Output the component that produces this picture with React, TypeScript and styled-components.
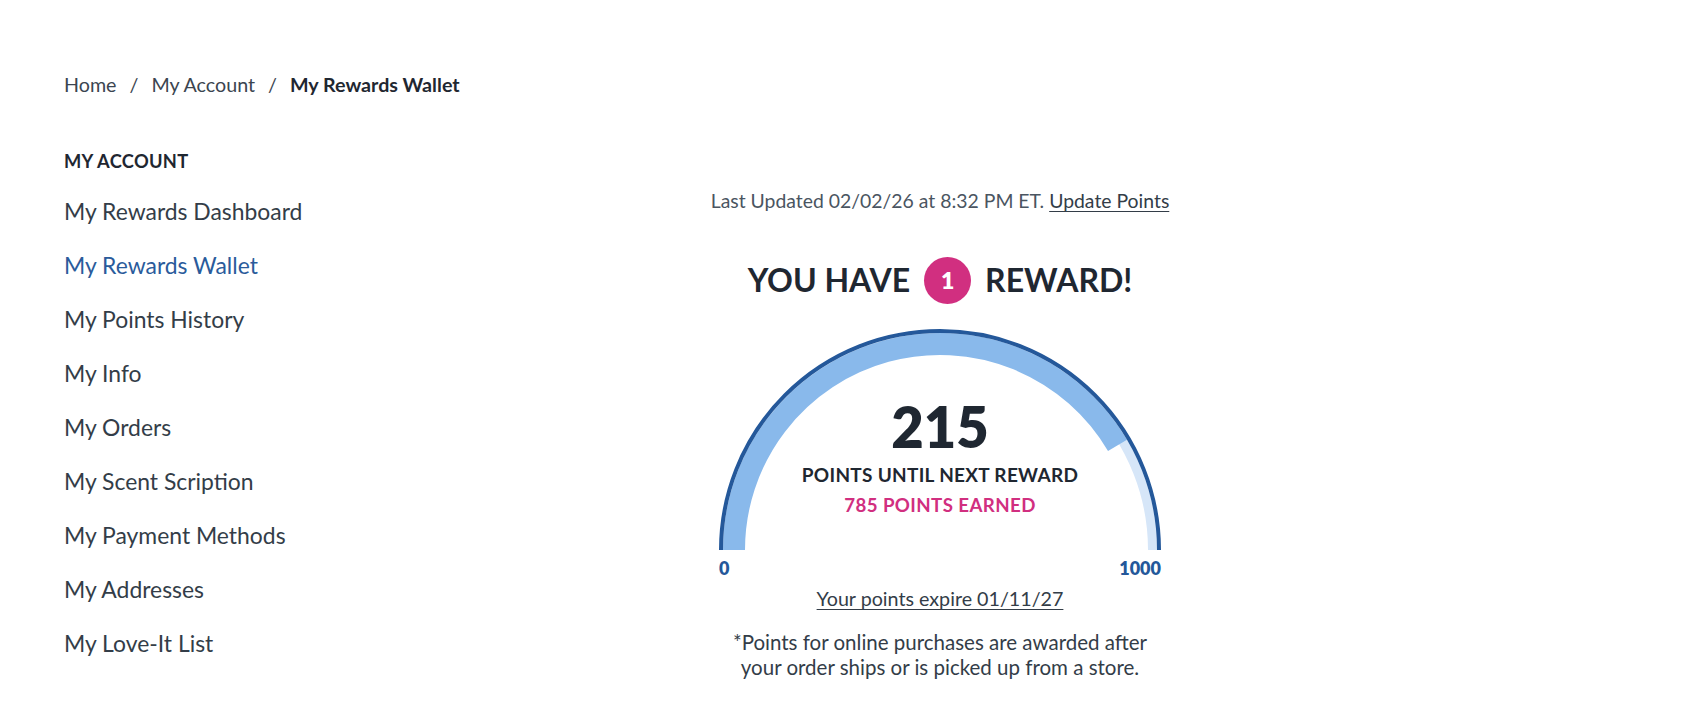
import React from "react";
import styled, { createGlobalStyle } from "styled-components";

const Global = createGlobalStyle`
  html, body { margin: 0; padding: 0; background: #ffffff; }
  body { font-family: "Lato", "Noto Sans", sans-serif; color: #1f2731; }
  * { box-sizing: border-box; }
`;

const Page = styled.div`
  width: 1686px;
  height: 702px;
  padding: 73px 0 0 64px;
  overflow: hidden;
`;

const Breadcrumb = styled.nav`
  display: flex;
  align-items: center;
  gap: 13px;
  font-size: 19.7px;
  line-height: 24px;
  color: #3b4550;
`;

const Crumb = styled.span<{ $current?: boolean }>`
  font-weight: ${(p) => (p.$current ? 700 : 400)};
  color: ${(p) => (p.$current ? "#1f2731" : "#3b4550")};
`;

const Sep = styled.span`
  color: #3b4550;
`;

const Body = styled.div`
  display: grid;
  grid-template-columns: 520px 712px;
  margin-top: 52px;
`;

const Side = styled.aside`
  display: flex;
  flex-direction: column;
`;

const SideTitle = styled.div`
  font-size: 18.3px;
  font-weight: 700;
  line-height: 24px;
  letter-spacing: 0.3px;
  color: #1f2731;
  margin-bottom: 12px;
`;

const SideLink = styled.a<{ $active?: boolean }>`
  display: block;
  font-size: 22.9px;
  line-height: 28px;
  padding: 12px 0 14px;
  color: ${(p) => (p.$active ? "#2a5b9b" : "#333d48")};
  text-decoration: none;
`;

const Main = styled.main`
  display: flex;
  flex-direction: column;
  align-items: center;
  padding-top: 40px;
`;

const Updated = styled.p`
  margin: 0;
  font-size: 19.4px;
  line-height: 24px;
  color: #4a5561;
`;

const UnderLink = styled.a`
  color: #333d48;
  text-decoration: underline;
  text-underline-offset: 3px;
`;

const Heading = styled.h2`
  margin: 43px 0 0;
  display: flex;
  align-items: center;
  gap: 14px;
  font-size: 32px;
  font-weight: 700;
  line-height: 48px;
  color: #1f2731;
`;

const Badge = styled.span`
  display: inline-flex;
  align-items: center;
  justify-content: center;
  width: 47px;
  height: 47px;
  border-radius: 50%;
  background: #d12f80;
  color: #ffffff;
  font-size: 23px;
  font-weight: 800;
`;

const GaugeWrap = styled.div`
  position: relative;
  width: 442px;
  margin-top: 25px;
`;

const GaugeSvg = styled.svg`
  display: block;
`;

const GaugeText = styled.div`
  position: absolute;
  left: 0;
  right: 0;
  top: 66px;
  display: flex;
  flex-direction: column;
  align-items: center;
`;

const Big = styled.div`
  font-size: 56px;
  font-weight: 800;
  line-height: 64px;
  color: #1f2731;
`;

const Until = styled.div`
  margin-top: 4px;
  font-size: 19px;
  font-weight: 700;
  line-height: 24px;
  letter-spacing: 0.3px;
  color: #1f2731;
`;

const Earned = styled.div`
  margin-top: 6px;
  font-size: 18.7px;
  font-weight: 700;
  line-height: 24px;
  letter-spacing: 0.4px;
  color: #d12f80;
`;

const Scale = styled.div`
  display: flex;
  justify-content: space-between;
  margin-top: 6px;
  font-size: 18px;
  font-weight: 800;
  line-height: 24px;
  color: #24589a;
`;

const Expire = styled.a`
  margin-top: 6px;
  font-size: 19.7px;
  line-height: 26px;
  color: #333d48;
  text-decoration: underline;
  text-underline-offset: 3px;
`;

const Note = styled.p`
  margin: 18px 0 0;
  font-size: 20.5px;
  line-height: 25px;
  text-align: center;
  color: #333d48;
`;

const CX = 221;
const CY = 221;

function arcPath(r: number, endDeg: number) {
  const a = (endDeg * Math.PI) / 180;
  const x1 = CX - r;
  const y1 = CY;
  const x2 = CX + r * Math.cos(a);
  const y2 = CY - r * Math.sin(a);
  const large = 180 - endDeg > 180 ? 1 : 0;
  return `M ${x1} ${y1} A ${r} ${r} 0 ${large} 1 ${x2.toFixed(2)} ${y2.toFixed(2)}`;
}

const Gauge: React.FC = () => (
  <GaugeWrap>
    <GaugeSvg width="442" height="221" viewBox="0 0 442 221">
      <path d={arcPath(212.5, 0)} fill="none" stroke="#d6e6f8" strokeWidth="9" />
      <path d={arcPath(206, 30.5)} fill="none" stroke="#89b9eb" strokeWidth="22" />
      <path d={arcPath(219, 0)} fill="none" stroke="#24589a" strokeWidth="4" />
    </GaugeSvg>
    <GaugeText>
      <Big>215</Big>
      <Until>POINTS UNTIL NEXT REWARD</Until>
      <Earned>785 POINTS EARNED</Earned>
    </GaugeText>
    <Scale>
      <span>0</span>
      <span>1000</span>
    </Scale>
  </GaugeWrap>
);

const links = [
  "My Rewards Dashboard",
  "My Rewards Wallet",
  "My Points History",
  "My Info",
  "My Orders",
  "My Scent Scription",
  "My Payment Methods",
  "My Addresses",
  "My Love-It List",
];

export default function App() {
  return (
    <>
      <Global />
      <Page>
        <Breadcrumb>
          <Crumb>Home</Crumb>
          <Sep>/</Sep>
          <Crumb>My Account</Crumb>
          <Sep>/</Sep>
          <Crumb $current>My Rewards Wallet</Crumb>
        </Breadcrumb>
        <Body>
          <Side>
            <SideTitle>MY ACCOUNT</SideTitle>
            {links.map((l) => (
              <SideLink key={l} $active={l === "My Rewards Wallet"}>
                {l}
              </SideLink>
            ))}
          </Side>
          <Main>
            <Updated>
              Last Updated 02/02/26 at 8:32 PM ET. <UnderLink>Update Points</UnderLink>
            </Updated>
            <Heading>
              YOU HAVE <Badge>1</Badge> REWARD!
            </Heading>
            <Gauge />
            <Expire>Your points expire 01/11/27</Expire>
            <Note>
              *Points for online purchases are awarded after
              <br />
              your order ships or is picked up from a store.
            </Note>
          </Main>
        </Body>
      </Page>
    </>
  );
}
